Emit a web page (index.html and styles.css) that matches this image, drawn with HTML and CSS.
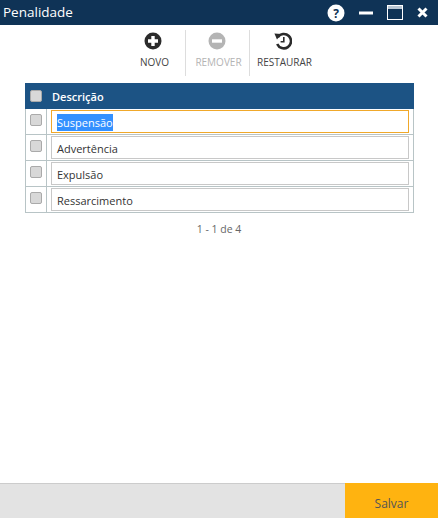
FILE: index.html
```html
<!DOCTYPE html>
<html lang="pt">
<head>
  <meta charset="utf-8">
  <title>Penalidade</title>
  <link rel="stylesheet" href="styles.css">
</head>
<body>
  <div class="window">
    <header class="titlebar">
      <h1>Penalidade</h1>
      <div class="win-btns">
        <svg width="18" height="18" viewBox="0 0 18 18"><circle cx="9" cy="9" r="8.5" fill="#fff"/><text x="9" y="13.5" text-anchor="middle" class="help-mark">?</text></svg>
        <svg width="14" height="18" viewBox="0 0 14 18"><rect x="0" y="7.5" width="14" height="3" fill="#fff"/></svg>
        <svg width="16" height="18" viewBox="0 0 16 18"><rect x="0.5" y="1.5" width="15" height="14" fill="none" stroke="#fff"/><rect x="1" y="2" width="14" height="3" fill="#b9c6d3"/></svg>
        <svg width="11" height="18" viewBox="0 0 11 18"><path d="M1.5 4.5l8 8M9.5 4.5l-8 8" stroke="#fff" stroke-width="3" fill="none"/></svg>
      </div>
    </header>

    <div class="toolbar">
      <button type="button" class="tool tool-novo">
        <svg width="18" height="18" viewBox="0 0 18 18"><circle cx="9" cy="9" r="8.5" fill="#2b2b2b"/><path d="M9 4v10M4 9h10" stroke="#fff" stroke-width="3.4"/></svg>
        <span>NOVO</span>
      </button>
      <div class="tool-sep"></div>
      <button type="button" class="tool tool-off">
        <svg width="18" height="18" viewBox="0 0 18 18"><circle cx="9" cy="9" r="8.5" fill="#b4b4b4"/><path d="M4 9h10" stroke="#fff" stroke-width="3.4"/></svg>
        <span>REMOVER</span>
      </button>
      <div class="tool-sep"></div>
      <button type="button" class="tool tool-rest">
        <svg width="18" height="18" viewBox="0 0 18 18"><path d="M3.8 5.2A7.2 7.2 0 1 1 3.2 12" fill="none" stroke="#2b2b2b" stroke-width="2.6"/><path d="M0.4 1.6l7 0.4-4.4 5.6z" fill="#2b2b2b"/><path d="M9.8 5v4.8H6.6" fill="none" stroke="#2b2b2b" stroke-width="1.6"/></svg>
        <span>RESTAURAR</span>
      </button>
    </div>

    <div class="grid">
      <div class="grid-head">
        <div class="cell-check"><span class="check"></span></div>
        <div class="head-label">Descrição</div>
      </div>
      <div class="grid-row">
        <div class="cell-check"><span class="check"></span></div>
        <div class="cell-input"><div class="field field-focus"><span class="selected">Suspensão</span></div></div>
      </div>
      <div class="grid-row">
        <div class="cell-check"><span class="check"></span></div>
        <div class="cell-input"><div class="field">Advertência</div></div>
      </div>
      <div class="grid-row">
        <div class="cell-check"><span class="check"></span></div>
        <div class="cell-input"><div class="field">Expulsão</div></div>
      </div>
      <div class="grid-row">
        <div class="cell-check"><span class="check"></span></div>
        <div class="cell-input"><div class="field">Ressarcimento</div></div>
      </div>
    </div>

    <p class="pager">1 - 1 de 4</p>

    <footer class="footer">
      <button type="button" class="btn-save">Salvar</button>
    </footer>
  </div>
</body>
</html>
```

FILE: styles.css
```css
* { margin:0; padding:0; box-sizing:border-box; }
html, body { height:100%; }
body {
  font-family:'Open Sans',sans-serif;
  font-size:11px;
  color:#333;
  background:#fff;
}
button { font-family:inherit; background:none; border:none; cursor:pointer; }
.window {
  display:flex;
  flex-direction:column;
  height:518px;
}
.titlebar {
  display:flex;
  align-items:center;
  justify-content:space-between;
  height:25px;
  padding:0 10px 0 3px;
  background:#0f3356;
  color:#fff;
  flex:none;
}
.titlebar h1 { font-size:13.5px; font-weight:400; margin-top:-2px; }
.win-btns { display:flex; align-items:center; gap:14px; }
.win-btns svg { display:block; }
.help-mark { font-family:'Open Sans',sans-serif; font-size:12px; font-weight:700; fill:#0f3356; }
.toolbar {
  display:flex;
  justify-content:center;
  height:46px;
  margin-top:5px;
  padding-right:4px;
  flex:none;
}
.tool {
  display:flex;
  flex-direction:column;
  align-items:center;
  gap:5px;
  padding-top:2px;
  font-size:10px;
  color:#444;
}
.tool svg { display:block; }
.tool span { white-space:nowrap; }
.tool-novo { width:70px; padding-left:10px; }
.tool-novo svg { margin-right:4px; }
.tool-off { width:63px; padding-left:3px; color:#b4b4b4; }
.tool-off svg { margin-right:3px; }
.tool-rest { width:70px; }
.tool-rest svg { margin-right:4px; }
.tool-sep { width:1px; height:46px; background:#ddd; }
.grid {
  margin:7px 24px 0 25px;
  flex:none;
}
.grid-head {
  display:flex;
  align-items:center;
  height:26px;
  background:#1c5384;
  color:#fff;
}
.head-label { font-size:11px; font-weight:600; padding-left:5px; }
.cell-check {
  display:flex;
  justify-content:center;
  width:22px;
  flex:none;
}
.check {
  display:block;
  width:12px;
  height:12px;
  background:#d8d8d8;
  border:1px solid #aaa;
  border-radius:2px;
}
.grid-row {
  display:flex;
  height:26px;
  border:solid #b8c4c6;
  border-width:0 1px 1px 1px;
}
.grid-row .cell-check {
  width:21px;
  border-right:1px solid #b8c4c6;
  padding-top:5px;
}
.cell-input { flex:1; padding:1px 4px 1px 4px; }
.field {
  height:23px;
  padding:1px 0 0 5px;
  line-height:21px;
  font-size:11px;
  color:#333;
  border:1px solid #c8c8c8;
}
.field-focus { border-color:#f0a82a; }
.selected { background:#3390ff; color:#fff; padding:1px 0; }
.pager {
  margin-top:9px;
  text-align:center;
  font-size:10.5px;
  color:#666;
  flex:none;
}
.footer {
  display:flex;
  justify-content:flex-end;
  height:35px;
  margin-top:auto;
  background:#e3e3e3;
  border-top:1px solid #ccc;
  flex:none;
}
.btn-save {
  width:93px;
  margin-top:-1px;
  padding-top:6px;
  background:#ffb310;
  font-size:12px;
  color:#555;
}
```
